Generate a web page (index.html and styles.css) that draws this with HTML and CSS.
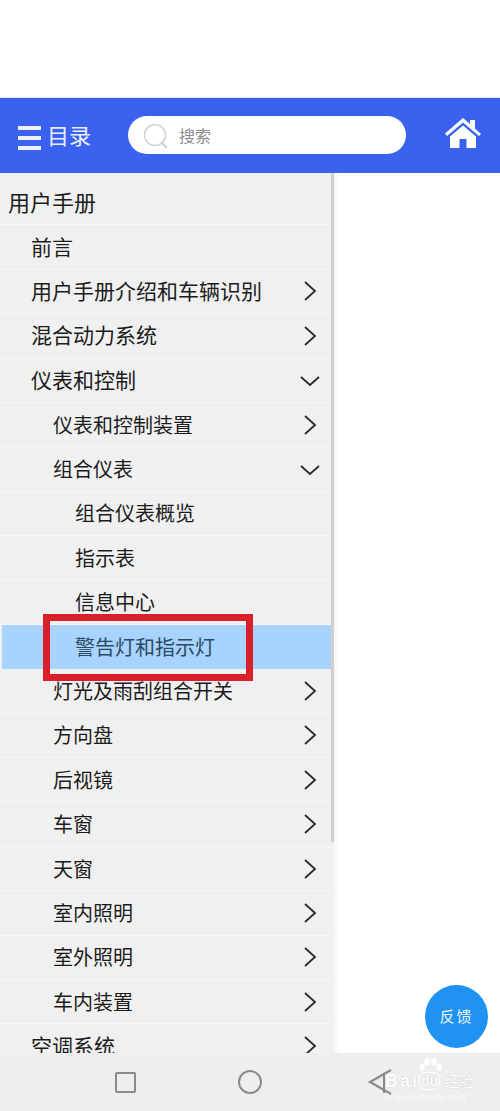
FILE: index.html
```html
<!DOCTYPE html>
<html lang="zh-CN">
<head>
    <meta charset="UTF-8">
    <title>用户手册</title>
    <link rel="stylesheet" href="styles.css">
</head>
<body>
    <div class="page">
        <div class="top-blank"></div>
        <header class="header">
            <div class="menu-btn">
                <span class="burger"><i></i><i></i><i></i></span>
                <span class="menu-text">目录</span>
            </div>
            <div class="search">
                <svg class="search-icon" width="28" height="30" viewBox="0 0 28 30">
                    <circle cx="13" cy="13" r="10.5" fill="none" stroke="#d4d4d4" stroke-width="1.6"/>
                    <path d="M20 21l5 5" fill="none" stroke="#d4d4d4" stroke-width="2.4"/>
                </svg>
                <span class="search-text">搜索</span>
            </div>
            <svg class="home" width="38" height="32" viewBox="0 0 38 32">
                <path d="M1 16.5L19 1l7 6V3h5v8.500l6 5.500-2 2L19 5.500 3 19z" fill="#fff"/>
                <path d="M6 19.500L19 8.500l13 11V31H22.500v-9h-7v9H6z" fill="#fff"/>
            </svg>
        </header>
        <div class="main">
            <nav class="sidebar">
                <div class="row root"><span>用户手册</span></div>
                <div class="row lv1"><span>前言</span></div>
                <div class="row lv1"><span>用户手册介绍和车辆识别</span><svg class="arrow" viewBox="0 0 16 24"><path d="M3 3l10 9-10 9"/></svg></div>
                <div class="row lv1"><span>混合动力系统</span><svg class="arrow" viewBox="0 0 16 24"><path d="M3 3l10 9-10 9"/></svg></div>
                <div class="row lv1"><span>仪表和控制</span><svg class="arrow down" viewBox="0 0 22 14"><path d="M2 3l9 8 9-8"/></svg></div>
                <div class="row lv2"><span>仪表和控制装置</span><svg class="arrow" viewBox="0 0 16 24"><path d="M3 3l10 9-10 9"/></svg></div>
                <div class="row lv2"><span>组合仪表</span><svg class="arrow down" viewBox="0 0 22 14"><path d="M2 3l9 8 9-8"/></svg></div>
                <div class="row lv3"><span>组合仪表概览</span></div>
                <div class="row lv3"><span>指示表</span></div>
                <div class="row lv3"><span>信息中心</span></div>
                <div class="row lv3 active"><span>警告灯和指示灯</span></div>
                <div class="row lv2"><span>灯光及雨刮组合开关</span><svg class="arrow" viewBox="0 0 16 24"><path d="M3 3l10 9-10 9"/></svg></div>
                <div class="row lv2"><span>方向盘</span><svg class="arrow" viewBox="0 0 16 24"><path d="M3 3l10 9-10 9"/></svg></div>
                <div class="row lv2"><span>后视镜</span><svg class="arrow" viewBox="0 0 16 24"><path d="M3 3l10 9-10 9"/></svg></div>
                <div class="row lv2"><span>车窗</span><svg class="arrow" viewBox="0 0 16 24"><path d="M3 3l10 9-10 9"/></svg></div>
                <div class="row lv2"><span>天窗</span><svg class="arrow" viewBox="0 0 16 24"><path d="M3 3l10 9-10 9"/></svg></div>
                <div class="row lv2"><span>室内照明</span><svg class="arrow" viewBox="0 0 16 24"><path d="M3 3l10 9-10 9"/></svg></div>
                <div class="row lv2"><span>室外照明</span><svg class="arrow" viewBox="0 0 16 24"><path d="M3 3l10 9-10 9"/></svg></div>
                <div class="row lv2"><span>车内装置</span><svg class="arrow" viewBox="0 0 16 24"><path d="M3 3l10 9-10 9"/></svg></div>
                <div class="row lv1 clipped"><span>空调系统</span><svg class="arrow" viewBox="0 0 16 24"><path d="M3 3l10 9-10 9"/></svg></div>
                <div class="scrollbar"></div>
            </nav>
            <div class="content"></div>
        </div>
        <footer class="navbar">
            <span class="nav-square"></span>
            <span class="nav-circle"></span>
            <svg class="nav-back" width="26" height="28" viewBox="0 0 26 28"><path d="M24 2L3 14l21 12" fill="none" stroke="#8a8a8a" stroke-width="2.200"/><path d="M17 5v20" fill="none" stroke="#8a8a8a" stroke-width="2"/></svg>
        </footer>

        <div class="red-box"></div>
        <div class="feedback">反馈</div>
        <div class="watermark">
            <svg class="paw" width="24" height="15" viewBox="0 0 24 15" fill="#fff">
                <ellipse cx="4" cy="9" rx="2.500" ry="3.500"/><ellipse cx="9" cy="4" rx="2.800" ry="3.800"/><ellipse cx="16" cy="4" rx="2.800" ry="3.800"/><ellipse cx="21" cy="9" rx="2.500" ry="3.500"/>
            </svg>
            <div class="wm-main"><b>Bai</b><b class="du">du</b><span>经验</span></div>
            <div class="wm-url">jingyan.baidu.com</div>
        </div>
    </div>
</body>
</html>
```

FILE: styles.css
```css
* {
    box-sizing: border-box;
}
body {
    margin: 0;
    background-color: #ffffff;
    font-family: "Noto Sans CJK SC", "Liberation Sans", sans-serif;
}
.page {
    position: relative;
    display: flex;
    flex-direction: column;
    width: 500px;
    height: 1111px;
    overflow: hidden;
}
.top-blank {
    height: 98px;
    flex: none;
    border-bottom: 1px solid #e3e6f0;
}

/* header */
.header {
    flex: none;
    display: flex;
    align-items: center;
    height: 75px;
    background-color: #3a62ef;
    padding: 0 18px 0 18px;
}
.menu-btn {
    display: flex;
    align-items: center;
    width: 110px;
    color: #e8eefc;
}
.burger {
    display: flex;
    flex-direction: column;
    gap: 6px;
    width: 23px;
    margin-top: 4px;
}
.burger i {
    display: block;
    height: 4px;
    background-color: #eef2fd;
}
.menu-text {
    margin-left: 6px;
    margin-top: -4px;
    font-size: 22px;
    line-height: 30px;
}
.search {
    display: flex;
    align-items: center;
    width: 278px;
    height: 38px;
    background-color: #ffffff;
    border-radius: 19px;
    padding-left: 14px;
    margin-top: -1px;
}
.search-icon {
    flex: none;
    margin-top: 3px;
}
.search-text {
    margin-left: 9px;
    font-size: 16px;
    color: #8d8d8d;
}
.home {
    margin-left: 38px;
    margin-top: -5px;
}

/* sidebar */
.main {
    flex: 1;
    display: flex;
    min-height: 0;
}
.sidebar {
    position: relative;
    width: 334px;
    padding-top: 8px;
    background-color: #f0f0f0;
    overflow: hidden;
}
.scrollbar {
    position: absolute;
    top: 0;
    right: 0;
    width: 3px;
    height: 669px;
    background-color: #cfcfcf;
}
.content {
    flex: 1;
    background: linear-gradient(to right, #f6f6f6, #ffffff 6px);
}
.row {
    display: flex;
    align-items: center;
    justify-content: space-between;
    width: 331px;
    height: 44.4px;
    padding-right: 13px;
    padding-bottom: 3px;
    border-bottom: 1px solid #f8f8f8;
    color: #1c1c1c;
    font-size: 20px;
    line-height: 28px;
    white-space: nowrap;
}
.root {
    padding-left: 8px;
    font-size: 22px;
}
.lv1 {
    padding-left: 31px;
    font-size: 21px;
}
.lv2 {
    padding-left: 53px;
    padding-bottom: 0;
}
.lv3 {
    padding-left: 75px;
    padding-bottom: 0;
}
.clipped {
    overflow: hidden;
}
.active {
    width: 329px;
    margin-left: 2px;
    padding-left: 73px;
    background-color: #a8d3fd;
    color: #2b4a63;
    border-bottom: none;
}
.arrow {
    width: 16px;
    height: 24px;
    flex: none;
    fill: none;
    stroke: #2a2a2a;
    stroke-width: 1.8;
    margin-top: 3px;
}
.lv2 .arrow {
    margin-top: 0;
}
.down {
    width: 22px;
    height: 14px;
    margin-right: -3px;
    margin-top: 4px;
}
.lv2 .down {
    margin-top: 1px;
}

/* bottom nav */
.navbar {
    flex: none;
    display: flex;
    align-items: center;
    height: 58px;
    padding-left: 115px;
    background-color: #eeeeee;
}
.nav-square {
    width: 21px;
    height: 21px;
    border: 2px solid #8a8a8a;
    border-radius: 2px;
}
.nav-circle {
    width: 24px;
    height: 24px;
    margin-left: 102px;
    border: 2px solid #8a8a8a;
    border-radius: 50%;
}
.nav-back {
    margin-left: 105px;
}

/* things on top */
.red-box {
    position: absolute;
    left: 43px;
    top: 614px;
    width: 210px;
    height: 67px;
    border: 7px solid #d91f2b;
}
.feedback {
    position: absolute;
    left: 425px;
    top: 985px;
    width: 63px;
    height: 63px;
    border-radius: 50%;
    background-color: #2093f2;
    color: #eaf5ff;
    font-size: 15px;
    letter-spacing: 2px;
    line-height: 61px;
    text-align: center;
}
.watermark {
    position: absolute;
    left: 385px;
    top: 1058px;
    width: 90px;
    color: #ffffff;
}
.paw {
    display: block;
    margin-left: 33px;
}
.wm-main {
    display: flex;
    align-items: center;
    margin-top: -1px;
    font-family: "Liberation Sans", sans-serif;
    font-size: 18px;
    line-height: 16px;
    white-space: nowrap;
    text-shadow: 0 0 1px #b5b5b5;
}
.wm-main b {
    font-weight: bold;
    letter-spacing: 2px;
}
.wm-main .du {
    margin-left: 0;
    padding: 0 1px;
    border: 1px solid #ffffff;
    border-radius: 6px;
    font-size: 14px;
    letter-spacing: 0;
}
.wm-main span {
    margin-left: 4px;
    font-family: "Noto Sans CJK SC", sans-serif;
    font-size: 15px;
}
.wm-url {
    margin-top: 2px;
    font-family: "Liberation Sans", sans-serif;
    font-size: 9px;
    line-height: 10px;
    letter-spacing: 0.5px;
    opacity: 0.7;
}
```
